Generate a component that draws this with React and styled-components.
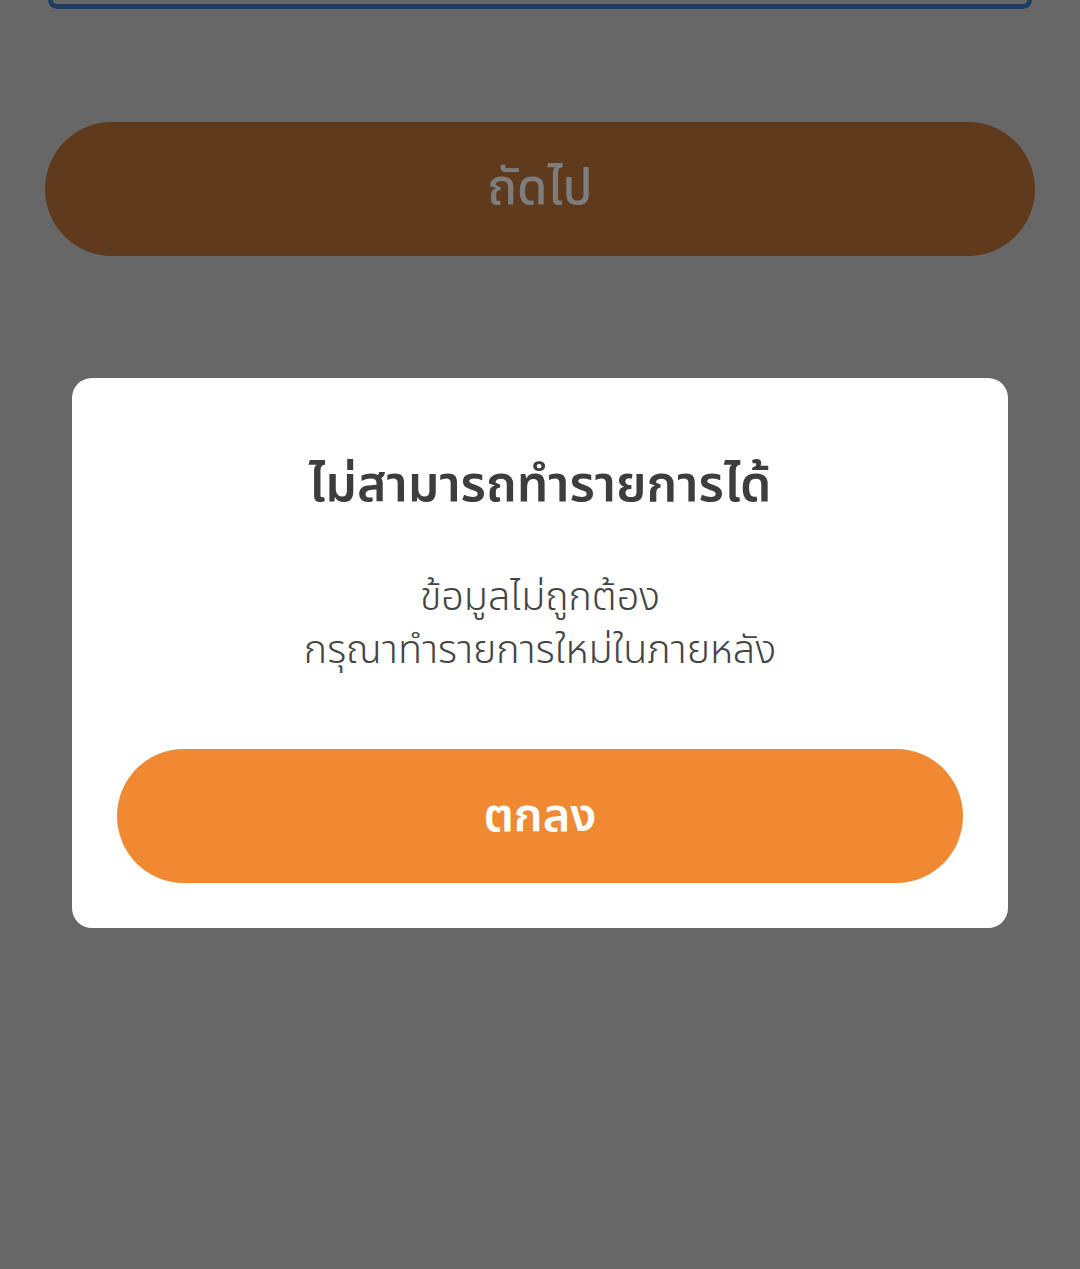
import React from 'react'
import styled, { createGlobalStyle } from 'styled-components'

const GlobalStyle = createGlobalStyle`
  html, body {
    margin: 0;
    padding: 0;
    background: #676767;
    font-family: 'Noto Sans Thai', 'Noto Sans', 'DejaVu Sans', sans-serif;
  }
`

function App() {
  return (
    <>
      <GlobalStyle />
      <Page>
        <FieldEdge />
        <NextButton disabled>ถัดไป</NextButton>
      </Page>

      <Overlay>
        <Dialog>
          <Title>ไม่สามารถทำรายการได้</Title>
          <Message>
            ข้อมูลไม่ถูกต้อง
            <br />
            กรุณาทำรายการใหม่ในภายหลัง
          </Message>
          <OkButton>ตกลง</OkButton>
        </Dialog>
      </Overlay>
    </>
  )
}

const Page = styled.div`
  min-height: 1269px;
  padding: 0 45px;
  display: flex;
  flex-direction: column;
  box-sizing: border-box;
`

const FieldEdge = styled.div`
  height: 4px;
  margin: 0 3px;
  border: 5px solid #1f3d63;
  border-top: none;
  border-radius: 0 0 20px 20px;
`

const NextButton = styled.button`
  margin-top: 113px;
  height: 134px;
  border: none;
  border-radius: 67px;
  background: #603a1c;
  color: #7d7d7d;
  font-family: inherit;
  font-size: 49px;
  font-weight: 500;
`

const Overlay = styled.div`
  position: fixed;
  inset: 0;
  display: flex;
  justify-content: center;
  align-items: flex-start;
  padding-top: 378px;
`

const Dialog = styled.div`
  width: 936px;
  box-sizing: border-box;
  background: #ffffff;
  border-radius: 20px;
  padding: 73px 45px 45px;
  display: flex;
  flex-direction: column;
  align-items: stretch;
  text-align: center;
`

const Title = styled.h2`
  margin: 0;
  color: #3d3d3d;
  font-size: 50px;
  font-weight: 600;
  line-height: 70px;
`

const Message = styled.p`
  margin: 51px 0 0;
  color: #444444;
  font-size: 39.5px;
  font-weight: 300;
  line-height: 53px;
`

const OkButton = styled.button`
  margin-top: 71px;
  height: 134px;
  border: none;
  border-radius: 67px;
  background: #ef8a33;
  color: #ffffff;
  font-family: inherit;
  font-size: 47px;
  font-weight: 600;
`

export default App
